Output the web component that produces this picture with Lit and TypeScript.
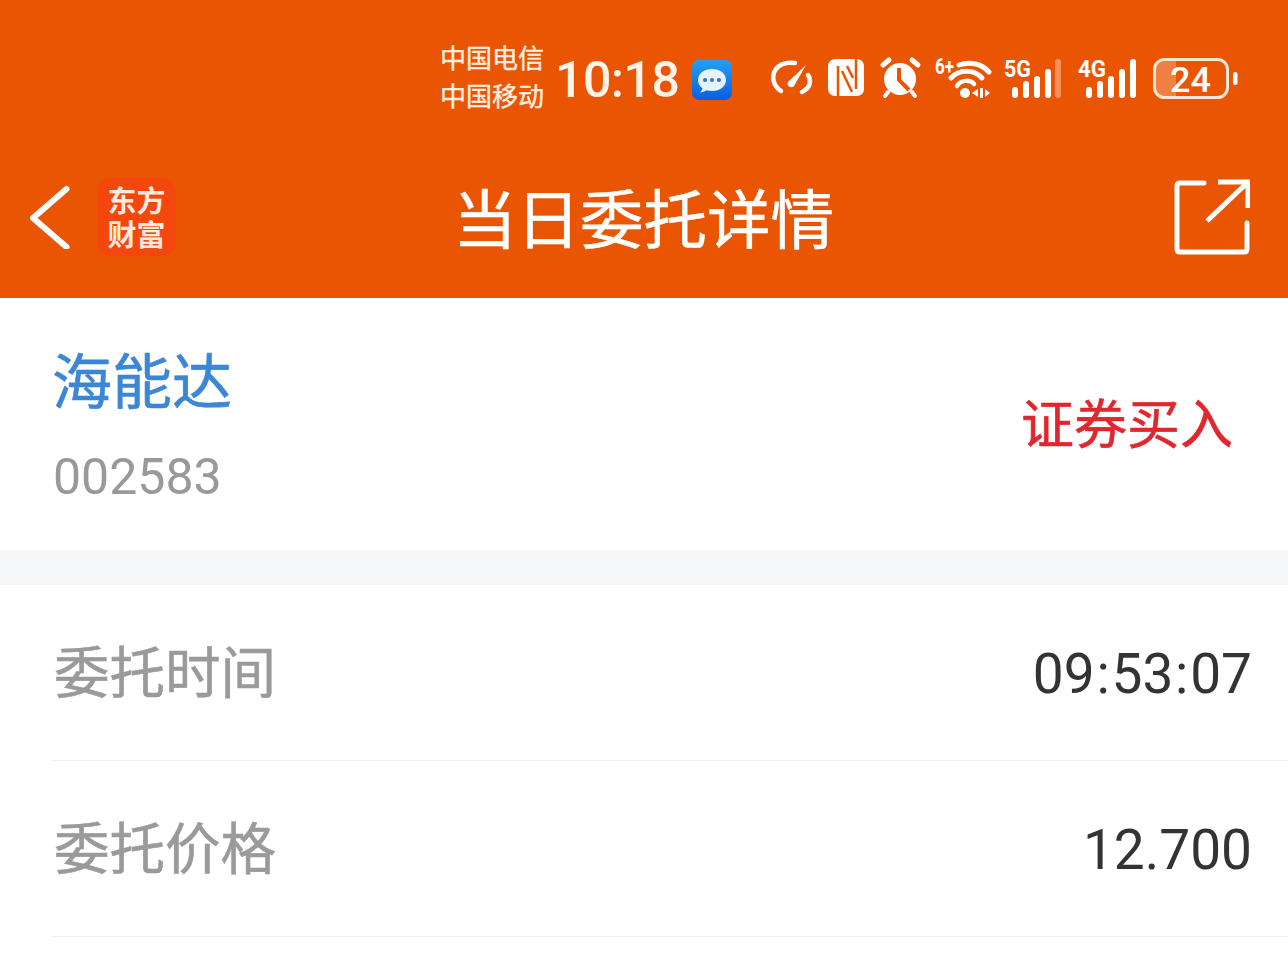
import { LitElement, html, css } from "lit";
import { customElement } from "lit/decorators.js";

@customElement("app-root")
export class AppRoot extends LitElement {
  static styles = css`
    :host { display: block; width: 1288px; height: 978px; overflow: hidden; background: #fff;
      font-family: "Roboto", "Noto Sans CJK SC", sans-serif; }
    .top { background: #ea5504; height: 298px; color: #fff; display: flex; flex-direction: column; }
    .status { height: 160px; display: flex; align-items: flex-start; padding: 40px 0 0 440px; box-sizing: border-box; }
    .carriers { font-size: 26px; font-weight: 400; -webkit-text-stroke: 0.4px currentColor; line-height: 38px; font-family: "Noto Sans CJK SC", sans-serif; color: #fdeee0; width: 115px; margin-top: -2px; white-space: nowrap; }
    .time { font-size: 50px; font-weight: 500; letter-spacing: -0.5px; line-height: 80px; width: 137px; white-space: nowrap; color: #fff3ea; }
    .chat { margin-top: 20px; width: 40px; height: 40px; flex: none; }
    .icons { margin-left: 19px; width: 490px; height: 80px; flex: none; }
    .icons text { font-family: "Roboto", sans-serif; font-weight: 700; fill: #fff; }
    .nav { flex: 1; display: flex; align-items: center; padding: 0 38px 24px 30px; }
    .back { width: 40px; height: 64px; flex: none; }
    .logo { margin-left: 27px; width: 79px; height: 78px; border-radius: 14px; background: #f4470d; padding-bottom: 2px; box-sizing: border-box; display: flex; align-items: center; justify-content: center; text-align: center;
      font-family: "Noto Sans CJK SC", sans-serif; font-weight: 700; font-size: 29px; line-height: 34px; color: #fdeadf; flex: none; }
    .title { flex: 1; text-align: center; font-size: 63.5px; -webkit-text-stroke: 0.6px currentColor; line-height: 80px; font-family: "Noto Sans CJK SC", sans-serif; padding: 0 63px 5px 0; white-space: nowrap; }
    .share { width: 76px; height: 76px; flex: none; }
    .stock { height: 252px; display: flex; align-items: center; justify-content: space-between; padding: 0 55px 3px 53px; box-sizing: border-box; }
    .name { font-size: 60px; -webkit-text-stroke: 0.6px currentColor; line-height: 80px; color: #3b86d6; font-family: "Noto Sans CJK SC", sans-serif; margin: 0 0 29px -1px; }
    .code { font-size: 50px; line-height: 60px; color: #999; }
    .side { font-size: 53px; -webkit-text-stroke: 0.6px currentColor; line-height: 70px; color: #e0272e; font-family: "Noto Sans CJK SC", sans-serif; margin-bottom: 3px; }
    .gap { height: 35px; background: #f5f6f8; }
    .rows { padding-left: 52px; }
    .row { height: 176px; box-sizing: border-box; border-bottom: 1px solid #eeeeee; display: flex; align-items: center; justify-content: space-between; padding: 0 36px 0 2px; }
    .label { font-size: 55.5px; -webkit-text-stroke: 0.6px currentColor; color: #9a9a9a; font-family: "Noto Sans CJK SC", sans-serif; line-height: 70px; margin-bottom: 7px; }
    .value { font-size: 55px; color: #333; line-height: 70px; margin-top: 2px; }
    .colon { margin: 0 1.75px; }
  `;

  render() {
    return html`
      <div class="top">
        <div class="status">
          <div class="carriers"><div>中国电信</div><div>中国移动</div></div>
          <div class="time">10:18</div>
          <svg class="chat" viewBox="0 0 40 40">
            <defs><linearGradient id="cg" x1="0" y1="0" x2="0" y2="1"><stop offset="0" stop-color="#22a0f5"/><stop offset="1" stop-color="#0a5fe0"/></linearGradient></defs>
            <rect width="40" height="40" rx="7" fill="url(#cg)"/>
            <path d="M20 9c-8 0-14 4.600-14 11 0 3.400 1.700 6.300 4.500 8.300-.3 1.700-1.200 3-2.500 4.200 2.600-.1 4.900-1 6.600-2.200 1.700.4 3.500.7 5.400.7 8 0 14-4.600 14-11S28 9 20 9z" fill="#e6f2fc"/>
            <circle cx="13" cy="20" r="2" fill="#2b6fd0"/><circle cx="20" cy="20" r="2" fill="#2b6fd0"/><circle cx="27" cy="20" r="2" fill="#2b6fd0"/>
          </svg>
          <svg class="icons" viewBox="750 40 490 80">
            <g fill="none" stroke="#fff" stroke-linecap="round">
              <path d="M780 91C772 86 770 76 775 69C779 64 786 62 794 63" stroke-width="4.500"/>
              <path d="M807 75C811 81 809 88 801 92" stroke-width="4.500"/>
            </g>
            <path d="M787 82L805 65L793 86C790 89 785 86 787 82Z" fill="#fff"/>

            <rect x="827" y="59" width="36" height="37" rx="7" fill="#fff"/>
            <path d="M837 66V97M855 58V89" stroke="#ea5504" stroke-width="2.500" fill="none"/>
            <path d="M841 71L851 92M846 66L852 78" stroke="#ea5504" stroke-width="2.500" fill="none"/>

            <circle cx="899" cy="79" r="16" fill="#fff"/>
            <path d="M898 68V80L908 90" stroke="#ea5504" stroke-width="4" fill="none"/>
            <path d="M882 65L888 60M917 65L911 60" stroke="#fff" stroke-width="5" stroke-linecap="round"/>
            <path d="M887 92L884 96M911 92L914 96" stroke="#fff" stroke-width="4" stroke-linecap="round"/>

            <text x="934" y="74" font-size="22" textLength="19" lengthAdjust="spacingAndGlyphs">6+</text>
            <g fill="none" stroke="#fff" stroke-linecap="round" stroke-width="5">
              <path d="M958 65C969 61 981 64 988 72"/>
              <path d="M950 78C958 69 973 69 981 78"/>
            </g>
            <path d="M956 86C960 79 970 80 973 84" fill="none" stroke="#fff" stroke-width="4.500" stroke-linecap="round"/>
            <circle cx="964" cy="93" r="5" fill="#fff"/>
            <path d="M977 89L971 93L977 97ZM982 88V98H979V88ZM984 89V97L989 93Z" fill="#fff"/>

            <text x="1003" y="77" font-size="24" textLength="27" lengthAdjust="spacingAndGlyphs">5G</text>
            <g fill="#fff">
              <rect x="1011" y="87" width="6" height="11" rx="3"/>
              <rect x="1022" y="81" width="6" height="17" rx="3"/>
              <rect x="1033" y="76" width="6" height="22" rx="3"/>
              <rect x="1044" y="69" width="6" height="29" rx="3"/>
              <rect x="1054" y="59" width="6" height="39" rx="3" fill-opacity=".35"/>
            </g>
            <text x="1077" y="77" font-size="24" textLength="28" lengthAdjust="spacingAndGlyphs">4G</text>
            <g fill="#fff">
              <rect x="1085" y="87" width="6" height="11" rx="3"/>
              <rect x="1096" y="81" width="6" height="17" rx="3"/>
              <rect x="1107" y="76" width="6" height="22" rx="3"/>
              <rect x="1118" y="69" width="6" height="29" rx="3"/>
              <rect x="1129" y="59" width="6" height="39" rx="3"/>
            </g>

            <path d="M1158 61H1175V96H1158C1156 96 1155 95 1155 93V64C1155 62 1156 61 1158 61Z" fill="#fff" fill-opacity=".25"/>
            <rect x="1153.500" y="59.500" width="73" height="38" rx="10" fill="none" stroke="#fde6d5" stroke-width="3"/>
            <text x="1169" y="92" font-size="35" style="font-weight:500" textLength="41" lengthAdjust="spacingAndGlyphs">24</text>
            <rect x="1232" y="72" width="4.500" height="13" rx="2.200" fill="#fff"/>
          </svg>
        </div>
        <div class="nav">
          <svg class="back" viewBox="0 0 40 64"><path d="M36.500 4L3 33L36.500 62" fill="none" stroke="#fff" stroke-width="6" stroke-linecap="round" stroke-linejoin="round"/></svg>
          <div class="logo"><div>东方<br />财富</div></div>
          <div class="title">当日委托详情</div>
          <svg class="share" viewBox="0 0 76 76">
            <path d="M30 4H6Q3 4 3 7V70Q3 73 6 73H70Q73 73 73 70V44" fill="none" stroke="#fff" stroke-width="5" stroke-linecap="round"/>
            <path d="M33 42L73 4M44 3H74V29" fill="none" stroke="#fff" stroke-width="5"/>
          </svg>
        </div>
      </div>
      <div class="stock">
        <div>
          <div class="name">海能达</div>
          <div class="code">002583</div>
        </div>
        <div class="side">证券买入</div>
      </div>
      <div class="gap"></div>
      <div class="rows">
        <div class="row"><span class="label">委托时间</span><span class="value">09<span class="colon">:</span>53<span class="colon">:</span>07</span></div>
        <div class="row"><span class="label">委托价格</span><span class="value">12.700</span></div>
      </div>
    `;
  }
}
